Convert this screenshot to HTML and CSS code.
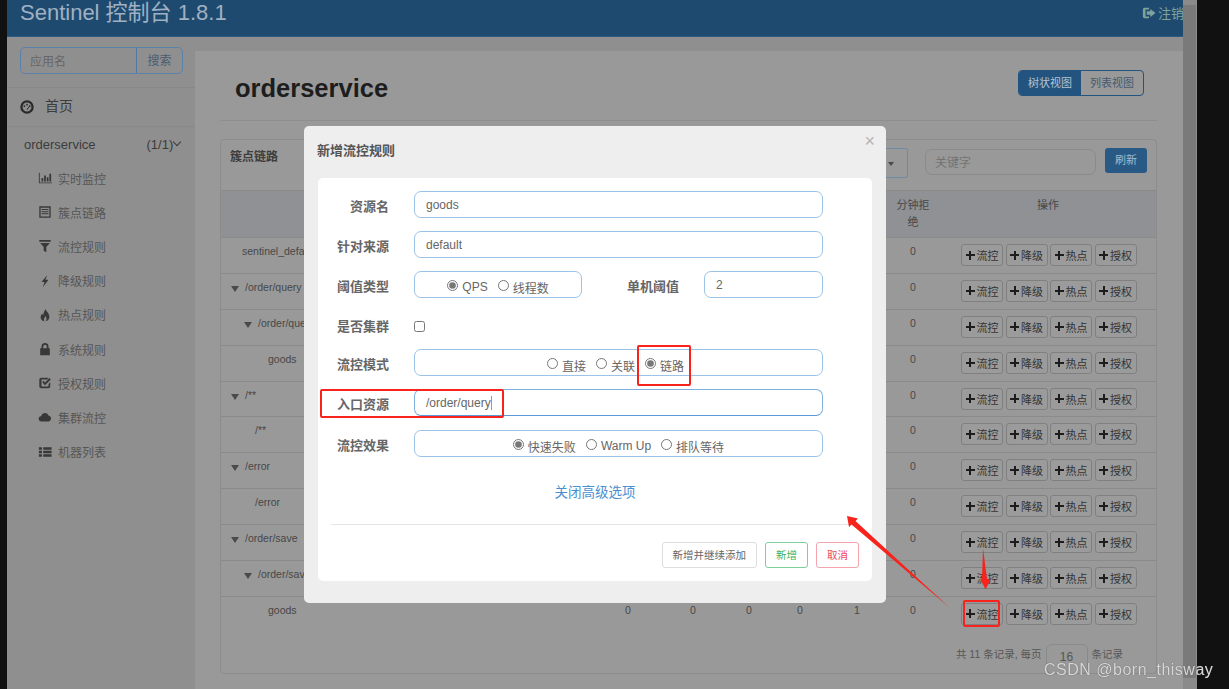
FILE: index.html
```html
<!DOCTYPE html>
<html lang="en">
<head>
  <meta charset="UTF-8" />
  <title>Sentinel 控制台</title>
  <link rel="stylesheet" href="styles.css">
</head>
<body>
  <svg class="defs" width="0" height="0">
    <symbol id="i-gauge" viewBox="0 0 16 16"><circle cx="8" cy="8" r="6.4" fill="none" stroke="currentColor" stroke-width="2.6"/><circle cx="5" cy="7" r="1"/><circle cx="8" cy="5.2" r="1"/><circle cx="11" cy="7" r="1"/><path d="M7.4 10.5 10 7.6l.6.5-2 3z"/></symbol>
    <symbol id="i-chart" viewBox="0 0 16 16"><path d="M1 2h1v11h14v1H1z"/><path d="M4 8h2v4H4zM7 5h2v7H7zM10 7h2v5h-2zM13 3h2v9h-2z"/></symbol>
    <symbol id="i-listalt" viewBox="0 0 16 16"><path fill-rule="evenodd" d="M1.5 1.5h13v13h-13zM3 3v10h10V3z"/><path d="M4 4.5h8v1.200H4zM4 7h8v1.200H4zM4 9.500h8v1.200H4z"/></symbol>
    <symbol id="i-filter" viewBox="0 0 16 16"><path d="M1.500 1h13v2.200H1.500zM2.500 4.500h11L9.500 9v6l-3-1.500V9z"/></symbol>
    <symbol id="i-flash" viewBox="0 0 16 16"><path d="M10.500 1 4 9h3.500L5.500 15 12 6.500H8.500z"/></symbol>
    <symbol id="i-fire" viewBox="0 0 16 16"><path d="M8.500 1c.5 2.500 4.500 4.500 4.500 9 0 3-2 5-4.500 5 1.500-1.500 1.800-3.500 0-6-.5 1.500-2 2.500-1.500 6C4.500 14.500 3 12.800 3 10.500c0-2 1-3 1.800-4.300.2 1 .6 1.500 1.200 1.800C6 5.500 7.500 3 8.500 1z"/></symbol>
    <symbol id="i-lock" viewBox="0 0 16 16"><path fill-rule="evenodd" d="M4 7V5a4 4 0 0 1 8 0v2h1.500v8h-11V7zm2 0h4V5a2 2 0 0 0-4 0z"/></symbol>
    <symbol id="i-check" viewBox="0 0 16 16"><path d="M3.500 2H12l-1.500 2H4v8h8V9l2-2v5a2 2 0 0 1-2 2H3.500a2 2 0 0 1-2-2V4a2 2 0 0 1 2-2z"/><path d="m4.800 7 1.500-1.500L8 7.300l5-5L14.700 4 8 10.700z"/></symbol>
    <symbol id="i-cloud" viewBox="0 0 16 16"><path d="M4 13a3 3 0 0 1-.5-6A4.500 4.500 0 0 1 12 6.200 3.500 3.500 0 0 1 12.500 13z"/></symbol>
    <symbol id="i-list" viewBox="0 0 16 16"><path d="M1 2.500h3.500v3H1zM6 2.500h9.500v3H6zM1 6.500h3.500v3H1zM6 6.500h9.500v3H6zM1 10.500h3.500v3H1zM6 10.500h9.500v3H6z"/></symbol>
    <symbol id="i-out" viewBox="0 0 16 16"><path d="M3 2h5v2H4v8h4v2H3a2 2 0 0 1-2-2V4a2 2 0 0 1 2-2z"/><path d="M9.500 3.500 15.500 8l-6 4.500V10H5.500V6h4z"/></symbol>
  </svg>

  <div class="edge"></div>
  <div class="app">
    <header class="topbar">
      <span class="brand">Sentinel 控制台 1.8.1</span>
      <span class="logout"><svg class="ico"><use href="#i-out"/></svg>注销</span>
    </header>

    <div class="layout">
      <aside class="sidebar">
        <div class="search">
          <span class="search-input">应用名</span>
          <span class="search-btn">搜索</span>
        </div>
        <div class="home"><svg class="ico"><use href="#i-gauge"/></svg><span>首页</span></div>
        <div class="app-name"><span>orderservice</span><span class="count">(1/1)</span><span class="chev"></span></div>
        <ul class="menu">
          <li><svg class="ico"><use href="#i-chart"/></svg>实时监控</li>
          <li><svg class="ico"><use href="#i-listalt"/></svg>簇点链路</li>
          <li><svg class="ico"><use href="#i-filter"/></svg>流控规则</li>
          <li><svg class="ico"><use href="#i-flash"/></svg>降级规则</li>
          <li><svg class="ico"><use href="#i-fire"/></svg>热点规则</li>
          <li><svg class="ico"><use href="#i-lock"/></svg>系统规则</li>
          <li><svg class="ico"><use href="#i-check"/></svg>授权规则</li>
          <li><svg class="ico"><use href="#i-cloud"/></svg>集群流控</li>
          <li><svg class="ico"><use href="#i-list"/></svg>机器列表</li>
        </ul>
      </aside>

      <main class="content">
        <div class="page-head">
          <h1>orderservice</h1>
          <div class="switch"><span class="on">树状视图</span><span>列表视图</span></div>
        </div>

        <section class="panel">
          <div class="panel-head">
            <strong>簇点链路</strong>
            <span class="select"><i class="caret"></i></span>
            <span class="keyword">关键字</span>
            <span class="refresh">刷新</span>
          </div>

          <div class="row row-th">
            <span></span><span></span><span></span><span></span><span></span><span></span>
            <span class="num th-wrap">分钟拒绝</span>
            <span class="num th-ops">操作</span>
          </div>

          <!-- the dialog covers the first five counters of these rows -->
          <div class="row"><span class="name lv-a">sentinel_default_context</span><span class="gap"></span><span class="num">0</span><span class="ops"><b>流控</b><b>降级</b><b>热点</b><b>授权</b></span></div>
          <div class="row"><span class="name lv-0"><i class="tri"></i>/order/query</span><span class="gap"></span><span class="num">0</span><span class="ops"><b>流控</b><b>降级</b><b>热点</b><b>授权</b></span></div>
          <div class="row"><span class="name lv-1"><i class="tri"></i>/order/query</span><span class="gap"></span><span class="num">0</span><span class="ops"><b>流控</b><b>降级</b><b>热点</b><b>授权</b></span></div>
          <div class="row"><span class="name lv-2">goods</span><span class="gap"></span><span class="num">0</span><span class="ops"><b>流控</b><b>降级</b><b>热点</b><b>授权</b></span></div>
          <div class="row"><span class="name lv-0"><i class="tri"></i>/**</span><span class="gap"></span><span class="num">0</span><span class="ops"><b>流控</b><b>降级</b><b>热点</b><b>授权</b></span></div>
          <div class="row"><span class="name lv-b">/**</span><span class="gap"></span><span class="num">0</span><span class="ops"><b>流控</b><b>降级</b><b>热点</b><b>授权</b></span></div>
          <div class="row"><span class="name lv-0"><i class="tri"></i>/error</span><span class="gap"></span><span class="num">0</span><span class="ops"><b>流控</b><b>降级</b><b>热点</b><b>授权</b></span></div>
          <div class="row"><span class="name lv-b">/error</span><span class="gap"></span><span class="num">0</span><span class="ops"><b>流控</b><b>降级</b><b>热点</b><b>授权</b></span></div>
          <div class="row"><span class="name lv-0"><i class="tri"></i>/order/save</span><span class="gap"></span><span class="num">0</span><span class="ops"><b>流控</b><b>降级</b><b>热点</b><b>授权</b></span></div>
          <div class="row"><span class="name lv-1"><i class="tri"></i>/order/save</span><span class="gap"></span><span class="num">0</span><span class="ops"><b>流控</b><b>降级</b><b>热点</b><b>授权</b></span></div>
          <div class="row"><span class="name lv-2">goods</span><span class="num">0</span><span class="num">0</span><span class="num">0</span><span class="num">0</span><span class="num">1</span><span class="num">0</span><span class="ops"><b>流控</b><b>降级</b><b>热点</b><b>授权</b></span></div>

          <div class="pager">共 11 条记录, 每页<span class="pager-size">16</span>条记录</div>
        </section>
      </main>
    </div>

    <div class="modal">
      <div class="modal-title">新增流控规则<span class="close">×</span></div>
      <form class="card">
        <div class="field"><label>资源名</label><span class="box grow">goods</span></div>
        <div class="field"><label>针对来源</label><span class="box grow">default</span></div>
        <div class="field">
          <label>阈值类型</label>
          <span class="box options short">
            <span class="opt"><input type="radio" name="grade" checked>QPS</span>
            <span class="opt"><input type="radio" name="grade">线程数</span>
          </span>
          <label class="label-inline">单机阈值</label>
          <span class="box count-box">2</span>
        </div>
        <div class="field field-check"><label>是否集群</label><input type="checkbox"></div>
        <div class="field">
          <label>流控模式</label>
          <span class="box options grow mode">
            <span class="opt"><input type="radio" name="mode">直接</span>
            <span class="opt"><input type="radio" name="mode">关联</span>
            <span class="opt"><input type="radio" name="mode" checked>链路</span>
          </span>
        </div>
        <div class="field field-entry"><label>入口资源</label><span class="box grow focus"><span class="cursor">/order/query</span></span></div>
        <div class="field">
          <label>流控效果</label>
          <span class="box options grow">
            <span class="opt"><input type="radio" name="effect" checked>快速失败</span>
            <span class="opt"><input type="radio" name="effect">Warm Up</span>
            <span class="opt"><input type="radio" name="effect">排队等待</span>
          </span>
        </div>
        <div class="more">关闭高级选项</div>
        <div class="actions">
          <span class="btn">新增并继续添加</span>
          <span class="btn btn-ok">新增</span>
          <span class="btn btn-no">取消</span>
        </div>
      </form>
    </div>

    <!-- annotations drawn on the screenshot -->
    <div class="mark mark-entry"></div>
    <div class="mark mark-radio"></div>
    <div class="mark mark-btn"></div>
    <svg class="arrows" width="1229" height="689" viewBox="0 0 1229 689">
      <path d="M949.500 607.500 851.500 524.500 849 527 847 516 858 518.500 855.500 521z" fill="#f8231c"/>
      <path d="M983 548 982 578.500 980.500 579 985.500 589.500 990.500 580 987 579z" fill="#f8231c"/>
    </svg>
  </div>
  <div class="scrollbar"></div>
  <div class="edge edge-right"></div>
  <div class="watermark">CSDN @born_thisway</div>
</body>
</html>
```

FILE: styles.css
```css
:root {
  --nav: #1f4a70;
  --side: #8f8f8f;
  --main: #999999;
  --line: #8a8a8a;
  --text: #474747;
  --blue: #9cc3e8;
  --red: #f8231c;
}

* {
  box-sizing: border-box;
}

body {
  margin: 0;
  height: 689px;
  overflow: hidden;
  display: flex;
  background: #111111;
  color: var(--text);
  font-family: "Liberation Sans", "Noto Sans CJK SC", sans-serif;
  font-size: 10.500px;
  filter: blur(0.35px);
}

.defs {
  position: absolute;
}

.ico {
  width: 14px;
  height: 14px;
  fill: currentColor;
  flex: none;
}

.edge {
  width: 7px;
  flex: none;
}

.edge-right {
  width: 32px;
}

.app {
  width: 1176px;
  flex: none;
  background: var(--side);
}

.scrollbar {
  width: 14px;
  flex: none;
  background: #7a7a7a;
  border-right: 1px solid #8e8e8e;
  border-top: 5px solid #8b8b8b;
  border-bottom: 11px solid #8b8b8b;
}

/* top bar */
.topbar {
  height: 37px;
  background: var(--nav);
  display: flex;
  justify-content: space-between;
  align-items: center;
  padding: 0 0 11px 13px;
  overflow: hidden;
  border-bottom: 1px solid #2a5a86;
}

.brand {
  font-size: 22px;
  color: #9fb1c2;
  line-height: 24px;
}

.logout {
  display: flex;
  align-items: center;
  gap: 2px;
  width: 41px;
  flex: none;
  white-space: nowrap;
  overflow: hidden;
  font-size: 13px;
  color: #7fa39c;
}

/* sidebar */
.layout {
  display: flex;
  height: 652px;
}

.sidebar {
  width: 188px;
  flex: none;
}

.search {
  display: flex;
  height: 27px;
  margin: 10px 12px 13px 13px;
  border: 1px solid #5b82a8;
  border-radius: 5px;
  color: #666;
  font-size: 12px;
}

.search-input {
  width: 116px;
  padding: 4px 9px;
  border-right: 1px solid #4f79a3;
}

.search-btn {
  flex: 1;
  text-align: center;
  line-height: 26px;
  color: #4a5d70;
}

.home {
  height: 40px;
  border-top: 1px solid #888;
  border-bottom: 1px solid #888;
  display: flex;
  align-items: center;
  gap: 11px;
  padding-left: 13px;
  font-size: 14px;
  color: #3c3c3c;
}

.home span {
  margin-top: -4px;
}

.home .ico {
  margin-top: -1px;
  color: #2a2a2a;
}

.app-name {
  display: flex;
  align-items: center;
  height: 34px;
  padding-left: 17px;
  font-size: 13px;
  color: #3c3c3c;
}

.count {
  margin-left: 51px;
}

.chev {
  width: 6px;
  height: 6px;
  margin: -4px 0 0 1px;
  border-right: 1px solid #3c3c3c;
  border-bottom: 1px solid #3c3c3c;
  transform: rotate(45deg);
}

.menu {
  list-style: none;
  margin: 0;
  padding: 0;
}

.menu li {
  display: flex;
  align-items: center;
  gap: 6px;
  height: 34.200px;
  padding-left: 31px;
  font-size: 12px;
  color: #565656;
}

.menu .ico {
  color: #383838;
}

/* main column */
.content {
  flex: 1;
  margin-top: 14px;
  padding: 0 26px 0 25px;
  background: var(--main);
}

.page-head {
  height: 70px;
  border-bottom: 1px solid #8e8e8e;
  display: flex;
  justify-content: space-between;
  align-items: center;
}

h1 {
  margin: 6px 0 0 15px;
  font-size: 25.500px;
  color: #1d1d1d;
}

.switch {
  display: flex;
  margin: 0 13px 5px 0;
  height: 26px;
  border: 1px solid #23547f;
  border-radius: 4px;
  overflow: hidden;
  color: #445a70;
  font-size: 11px;
}

.switch span {
  width: 62px;
  text-align: center;
  line-height: 24px;
}

.switch .on {
  background: #23547f;
  color: #b4c4d4;
}

.panel {
  position: relative;
  margin-top: 18px;
  height: 535px;
  border: 1px solid #8c8c8c;
  border-radius: 4px;
}

.panel-head {
  height: 50px;
  display: flex;
  align-items: flex-start;
  padding: 8px 9px 0 9px;
  font-size: 12px;
}

.panel-head strong {
  margin-right: auto;
  line-height: 19px;
  color: #3d3d3d;
}

.select {
  width: 30px;
  height: 30px;
  margin-right: 17px;
  padding: 13px 0 0 10px;
  border: 1px solid #6f8aa3;
  border-radius: 0 3px 3px 0;
  border-left: 0;
}

.caret {
  display: block;
  width: 0;
  border: 3.500px solid transparent;
  border-top: 4px solid #4a4a4a;
  border-bottom: 0;
}

.keyword {
  width: 171px;
  height: 26px;
  margin-top: 1px;
  padding: 3px 9px;
  border: 1px solid #8a8a8a;
  border-radius: 7px;
  color: #737373;
}

.refresh {
  width: 42px;
  height: 25px;
  margin-left: 9px;
  border-radius: 3px;
  background: #285a85;
  color: #a8bbcc;
  font-size: 11px;
  line-height: 24px;
  text-align: center;
}

.row {
  display: grid;
  grid-template-columns: 379px 56px 74px 38px 64px 50px 62px 212px;
  height: 35.900px;
  padding-top: 7px;
  border-top: 1px solid var(--line);
}

.row-th {
  height: 47px;
  background: #8f9195;
  line-height: 17px;
  padding: 6px 0 0;
  font-size: 11px;
}

.th-wrap {
  padding: 0 12px;
}

.th-ops {
  padding-right: 4px;
}

.gap {
  grid-column: 2 / span 5;
}

.num {
  text-align: center;
}

.name {
  width: 84px;
  overflow: hidden;
  white-space: nowrap;
  display: block;
}

.lv-a { padding-left: 21px; }
.lv-0 { padding-left: 10px; }
.lv-1 { padding-left: 23px; }
.lv-2 { padding-left: 47px; }
.lv-b { padding-left: 34px; }

.tri {
  display: inline-block;
  width: 0;
  margin-right: 6px;
  border: 4px solid transparent;
  border-top: 6px solid #4a4a4a;
  border-bottom: 0;
  vertical-align: -1px;
}

.ops {
  display: flex;
  gap: 2.500px;
  height: 22px;
  margin-top: -1px;
  padding-left: 17px;
  font-size: 11px;
}

.ops b {
  display: flex;
  align-items: center;
  gap: 2px;
  width: 42px;
  height: 22px;
  justify-content: center;
  border: 1px solid #808080;
  border-radius: 3px;
  background: #9b9b9b;
  font-weight: 400;
  color: #333;
}

.ops b::before {
  content: "";
  width: 9px;
  height: 9px;
  background:
    linear-gradient(#1d1d1d, #1d1d1d) center / 9px 2px no-repeat,
    linear-gradient(#1d1d1d, #1d1d1d) center / 2px 9px no-repeat;
}

.pager {
  display: flex;
  align-items: center;
  justify-content: flex-end;
  gap: 4px;
  height: 30px;
  margin-top: 7px;
  padding-right: 33px;
  color: #565656;
  line-height: 14px;
}

.pager-size {
  align-self: flex-start;
  width: 42px;
  height: 30px;
  margin-top: 5px;
  padding-top: 5px;
  border: 1px solid #8a8a8a;
  border-radius: 6px;
  text-align: center;
  font-size: 12px;
}

/* dialog */
.modal {
  position: absolute;
  left: 304px;
  top: 126px;
  width: 582px;
  height: 477px;
  padding: 0 14px;
  background: #eeeeee;
  border-radius: 5px;
}

.modal-title {
  position: relative;
  height: 52px;
  padding: 14px 0 0 0;
  margin-left: -1px;
  font-size: 13px;
  font-weight: 700;
  color: #555;
}

.close {
  position: absolute;
  right: -3px;
  top: 5px;
  font-size: 18px;
  font-weight: 400;
  color: #b4b4b4;
}

.card {
  height: 403px;
  padding: 13px 13px 0 13px;
  background: #fff;
  border-radius: 5px;
  color: #666;
}

.field {
  display: flex;
  align-items: flex-start;
  height: 27px;
  margin-bottom: 13px;
  font-size: 12px;
}

.field label {
  width: 58px;
  flex: none;
  padding-top: 5px;
  text-align: right;
  font-size: 13px;
  font-weight: 700;
  color: #666;
}

.field-check {
  margin-bottom: 11px;
}

.field-entry {
  margin-bottom: 14px;
}

.box {
  height: 27px;
  margin-left: 25px;
  padding: 0 11px;
  border: 1px solid var(--blue);
  border-radius: 7px;
  display: flex;
  align-items: center;
}

.grow {
  width: 409px;
  flex: none;
}

.short {
  width: 168px;
  flex: none;
}

.options {
  justify-content: center;
  gap: 10px;
}

.mode {
  padding-right: 17px;
}

.opt {
  display: inline-flex;
  align-items: center;
  gap: 4px;
  white-space: nowrap;
  padding-top: 5px;
}

.opt input {
  width: 11px;
  height: 11px;
  margin: -4px 0 0;
  accent-color: #777;
}

.field .label-inline {
  width: 53px;
  margin-left: 44px;
}

.count-box {
  width: 119px;
  margin-left: 25px;
}

.field input[type="checkbox"] {
  width: 11px;
  height: 11px;
  margin: 10px 0 0 25px;
}

.focus {
  border-color: #7fb0de;
  border-bottom-color: #5b9bd5;
}

.cursor {
  border-right: 1px solid #999;
}

.more {
  margin: 26px 0 0;
  text-align: center;
  font-size: 13.500px;
  color: #4a90d0;
  line-height: 20px;
  height: 41px;
}

.actions {
  display: flex;
  justify-content: flex-end;
  gap: 8px;
  height: 45px;
  padding-top: 17px;
  border-top: 1px solid #e4e4e4;
}

.btn {
  height: 26px;
  padding: 0 10px;
  border: 1px solid #ddd;
  border-radius: 3px;
  line-height: 24px;
  font-size: 10.500px;
  color: #666;
}

.btn-ok {
  border-color: #7ed09a;
  color: #3cb060;
}

.btn-no {
  border-color: #f5a3ad;
  color: #e8485c;
}

/* red marks */
.mark {
  position: absolute;
  border: 2.500px solid var(--red);
  border-radius: 2px;
}

.mark-entry {
  left: 320px;
  top: 389px;
  width: 184px;
  height: 29px;
}

.mark-radio {
  left: 637px;
  top: 345px;
  width: 54px;
  height: 41px;
}

.mark-btn {
  left: 963px;
  top: 600px;
  width: 37px;
  height: 27px;
}

.arrows {
  position: absolute;
  left: 0;
  top: 0;
  pointer-events: none;
}

.watermark {
  position: absolute;
  left: 1044px;
  top: 661px;
  font-size: 16px;
  letter-spacing: 0.500px;
  color: #d8d8d8;
  text-shadow: 0 0 1px #555;
}
```
